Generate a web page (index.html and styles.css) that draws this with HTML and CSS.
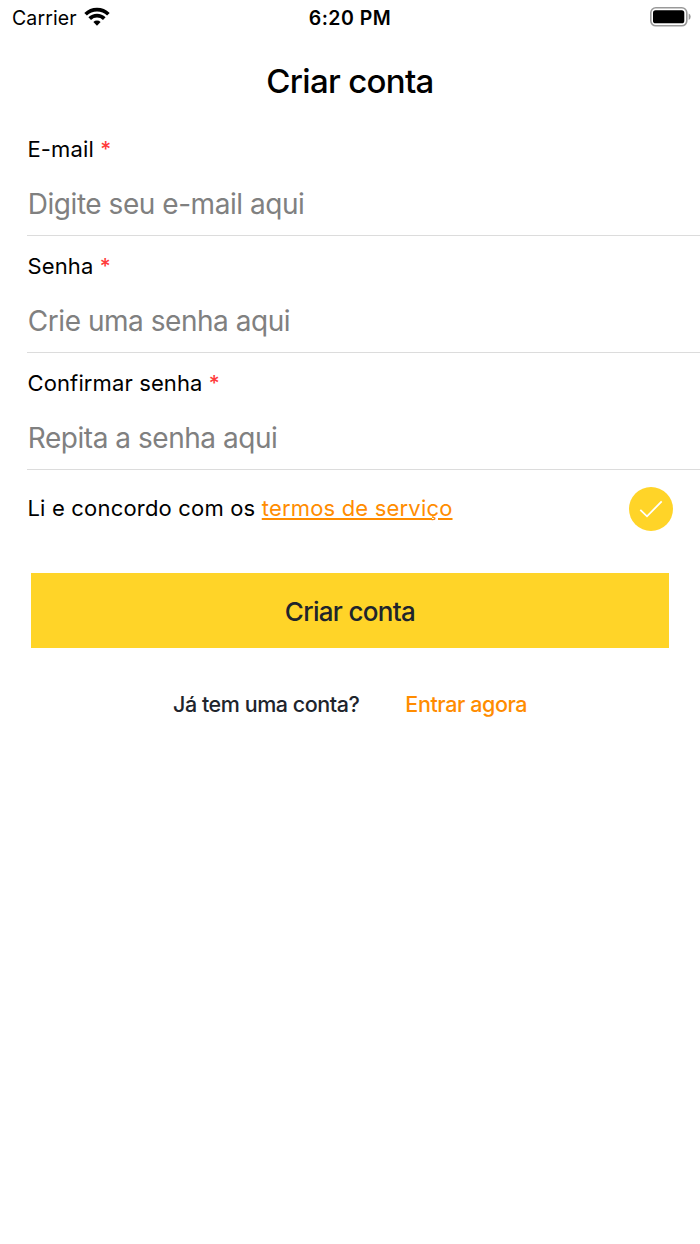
FILE: index.html
```html
<!DOCTYPE html>
<html lang="pt-BR">
<head>
<meta charset="utf-8">
<title>Criar conta</title>
<link rel="stylesheet" href="styles.css">
</head>
<body>
<div class="status">
  <div class="status-left">
    <span class="carrier">Carrier</span>
    <svg class="wifi" width="26" height="19" viewBox="0 0 26 19" fill="none" stroke="#000" stroke-width="3.7">
      <path d="M1.6 7.2 A16.3 16.3 0 0 1 24.4 7.2"/>
      <path d="M5.7 11.6 A10.4 10.4 0 0 1 20.3 11.6"/>
      <path d="M13 18.7 L9.4 15.1 A5.1 5.1 0 0 1 16.6 15.1 Z" fill="#000" stroke="none"/>
    </svg>
  </div>
  <span class="clock">6:20 PM</span>
  <svg class="battery" width="42" height="20" viewBox="0 0 42 20">
    <rect x=".8" y=".8" width="36" height="18" rx="5" fill="#fff" stroke="#999" stroke-width="1.6"/>
    <rect x="3" y="3.3" width="31.3" height="13" rx="2.6" fill="#000"/>
    <path d="M38.7 6.5 Q40.7 7.5 40.7 9.8 Q40.7 12.1 38.7 13.1 Z" fill="#999"/>
  </svg>
</div>
<h1 class="title">Criar conta</h1>
<form class="form">
  <div class="field">
    <label class="label">E-mail <span class="req">*</span></label>
    <span class="placeholder">Digite seu e-mail aqui</span>
  </div>
  <div class="field">
    <label class="label">Senha <span class="req">*</span></label>
    <span class="placeholder">Crie uma senha aqui</span>
  </div>
  <div class="field">
    <label class="label">Confirmar senha <span class="req">*</span></label>
    <span class="placeholder">Repita a senha aqui</span>
  </div>
  <div class="terms">
    <span class="terms-text">Li e concordo com os <a class="terms-link">termos de serviço</a></span>
    <svg class="check" width="44" height="44" viewBox="0 0 44 44">
      <circle cx="22" cy="22" r="22" fill="#ffd428"/>
      <path d="M11.3 22.8 L18 29.3 L32.7 14.4" fill="none" stroke="#fff" stroke-width="1.8"/>
    </svg>
  </div>
  <button class="submit" type="button">Criar conta</button>
</form>
<div class="footer">
  <span class="question">Já tem uma conta?</span>
  <a class="login">Entrar agora</a>
</div>
</body>
</html>
```
FILE: styles.css
```css
* { box-sizing: border-box; }
body {
  margin: 0;
  min-height: 1244px;
  background: #fff;
  color: #000;
  font-family: Inter, "Liberation Sans", sans-serif;
  white-space: nowrap;
}
svg { display: block; flex: none; }
.status {
  display: grid;
  grid-template-columns: 1fr auto 1fr;
  align-items: center;
  height: 36px;
  padding: 0 8px 0 12px;
}
.status-left { display: flex; align-items: center; gap: 7.5px; }
.carrier { font-size: 19.5px; letter-spacing: 0.1px; }
.wifi { margin-top: -3px; }
.clock { margin-right: 4px; font-size: 19.5px; font-weight: 600; letter-spacing: 0.5px; }
.battery { justify-self: end; margin-top: -2px; }
.title {
  margin: 0;
  height: 83px;
  padding-top: 25px;
  font-size: 33px;
  line-height: 40px;
  font-weight: 460;
  text-align: center;
  letter-spacing: -0.7px;
}
.field {
  display: flex;
  flex-direction: column;
  height: 117px;
  margin-left: 27px;
  padding-top: 15px;
  border-bottom: 1px solid #dcdcdc;
}
.label { padding-left: 0.5px; font-size: 22px; line-height: 30px; letter-spacing: 0.12px; }
.req { color: #ff3b3b; font-size: 21px; font-weight: 500; }
.placeholder {
  margin-top: 19px;
  padding-left: 0.8px;
  font-size: 28px;
  line-height: 40px;
  letter-spacing: -0.46px;
  color: #808080;
}
.terms {
  display: flex;
  align-items: center;
  justify-content: space-between;
  height: 78px;
  padding: 0 27px 0 27.5px;
}
.terms-text { margin-top: -3px; font-size: 22px; line-height: 30px; letter-spacing: 0.18px; }
.terms-link {
  color: #ff8c00;
  text-decoration: underline;
  text-decoration-thickness: 1.5px;
  text-underline-offset: 2px;
}
.submit {
  display: block;
  width: 638.5px;
  height: 75.4px;
  margin: 25px 0 0 30.7px;
  padding: 2px 0 0;
  border: 0;
  background: #ffd428;
  color: #20242c;
  font-family: inherit;
  font-size: 26px;
  font-weight: 460;
  letter-spacing: -0.7px;
}
.footer {
  display: flex;
  gap: 46px;
  margin-top: 41px;
  padding-left: 173px;
  font-size: 21.5px;
  line-height: 30px;
  font-weight: 460;
}
.question { color: #20242c; letter-spacing: -0.46px; }
.login { color: #ff8c00; letter-spacing: -0.4px; }
```
